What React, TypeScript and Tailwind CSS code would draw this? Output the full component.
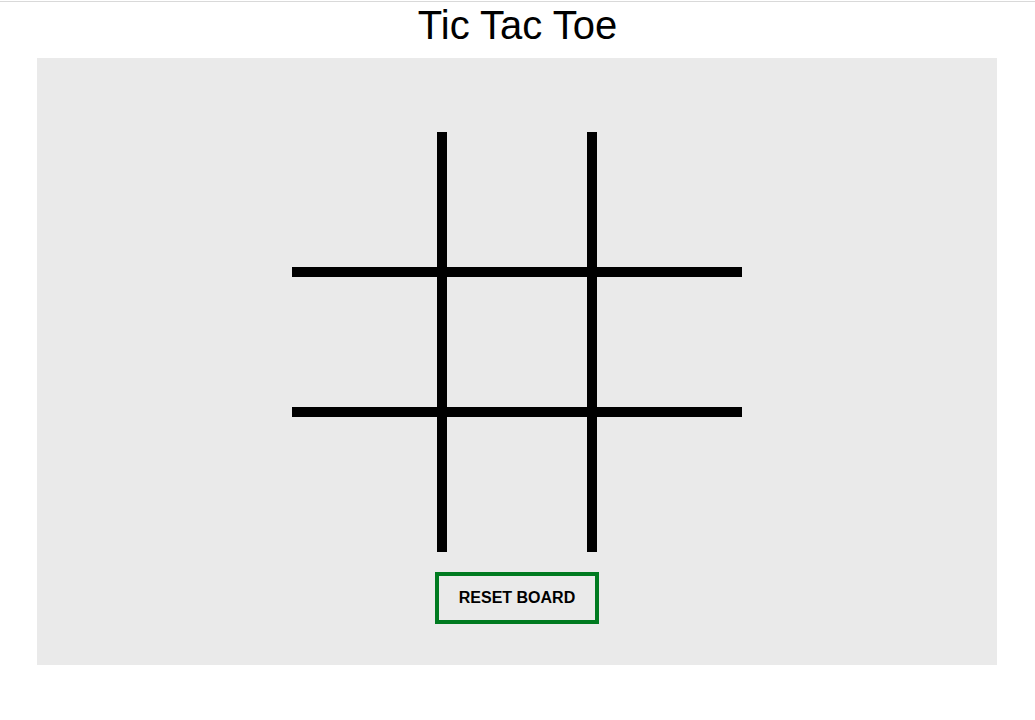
import React from "react";

export default function App() {
  const cells = Array.from({ length: 9 }, (_, i) => i);
  return (
    <div className="w-[1035px] h-[720px] bg-white" style={{ fontFamily: '"Liberation Sans", Arial, sans-serif' }}>
      <div className="pt-px">
        <div className="h-px bg-[#d9d9d9]" />
      </div>
      <h1 className="text-center text-[40px] leading-[46px] text-black font-normal">Tic Tac Toe</h1>
      <div className="mx-[37px] mt-[10px] w-[960px] h-[607px] bg-[#eaeaea] flex flex-col items-center pt-[74px]">
        <div className="grid grid-cols-[150px_150px_150px] grid-rows-[140px_140px_140px]">
          {cells.map((i) => {
            const r = Math.floor(i / 3);
            const c = i % 3;
            const cls = [
              r > 0 ? "border-t-[5px]" : "",
              r < 2 ? "border-b-[5px]" : "",
              c > 0 ? "border-l-[5px]" : "",
              c < 2 ? "border-r-[5px]" : "",
            ].join(" ");
            return <div key={i} className={`border-black border-solid ${cls}`} />;
          })}
        </div>
        <button className="mt-[20px] w-[164px] h-[52px] border-[4px] border-[#007a20] bg-transparent flex items-center justify-center text-[16px] font-bold text-black">
          RESET BOARD
        </button>
      </div>
    </div>
  );
}
